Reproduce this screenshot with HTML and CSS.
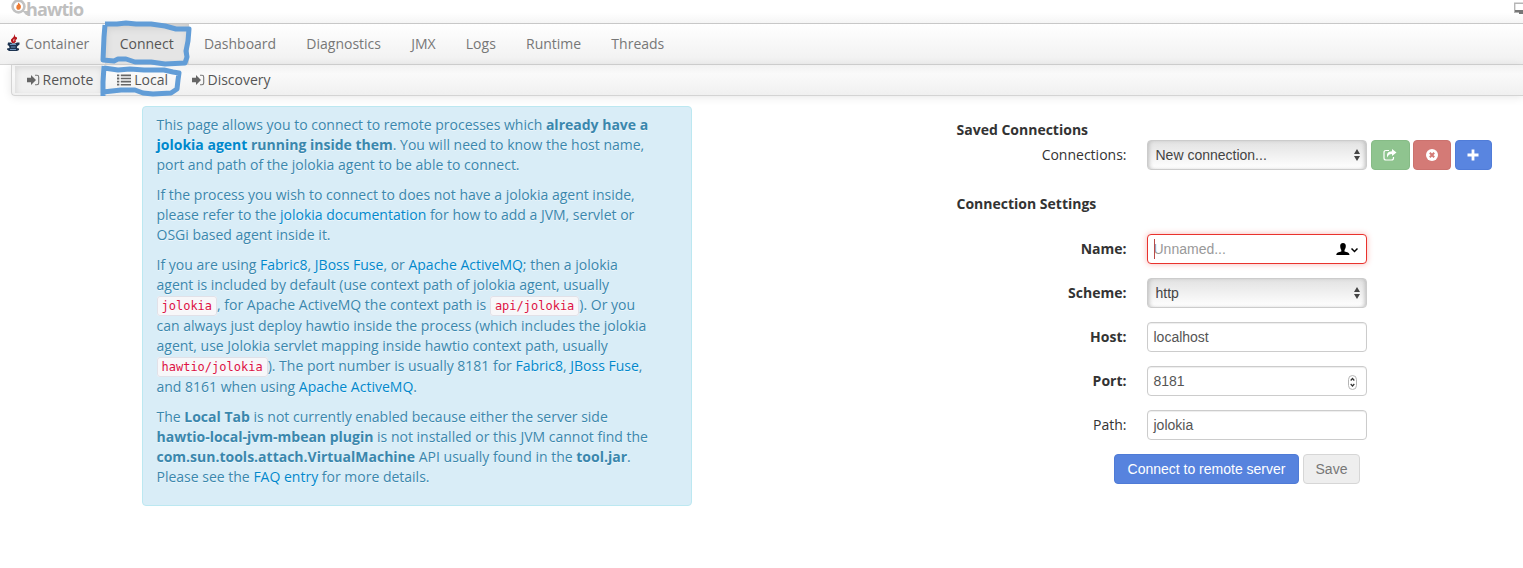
FILE: index.html
```html
<!DOCTYPE html>
<html lang="en">
<head>
<meta charset="utf-8">
<title>hawtio</title>
<link rel="stylesheet" href="styles.css">
</head>
<body>
<header class="topbar">
  <div class="brand">
    <svg class="brand-mark" width="19" height="17" viewBox="0 0 19 17"><circle cx="8.500" cy="6.500" r="5.900" fill="none" stroke="#c2c2c2" stroke-width="2.600"/><path d="M12.500 11h6.500v4h-3z" fill="#c2c2c2"/><path d="M8 2.500c3 2 3.500 4 2.500 6-1 1.800-3.500 1.500-4 0-.5-1.700.2-2.200.4-3.500 1 .3 1.300-1 1.100-2.500z" fill="#ee7b32"/></svg>
    <span class="brand-name">hawtio</span>
  </div>
  <svg class="monitor" width="12" height="12" viewBox="0 0 12 12"><path d="M.7 1.200h14v9h-14z" fill="#fff" stroke="#b5b5b5" stroke-width="1.400"/><path d="M1 8h14v2H1zM5 10h6v2H5z" fill="#777"/></svg>
</header>
<nav class="mainnav">
  <a class="tab container"><svg width="13" height="17" viewBox="0 0 13 17"><path d="M8 0v2.500l2 1v1.500L8.500 6l.5 1.500L7.500 9H5L4 7V5.500L6.500 3z" fill="#b5161c"/><path d="M6 6l1.500-1.500L7 8z" fill="#f3c9c9"/><path d="M1 8.500h3l1 1h3l2-1h2.500v2L10 12.500v1.500l2 .5v1.500l-2 1H2L0 15.500v-1l2.500-.5-.5-2-1.500-1z" fill="#1d3350"/><path d="M3 10.500h6M4 13h4.500M3 15.500h6" stroke="#6f95c0"/></svg>Container</a>
  <a class="tab active">Connect</a>
  <a class="tab">Dashboard</a>
  <a class="tab">Diagnostics</a>
  <a class="tab">JMX</a>
  <a class="tab">Logs</a>
  <a class="tab">Runtime</a>
  <a class="tab">Threads</a>
</nav>
<nav class="subnav">
  <a class="sub selected"><svg class="signin" width="13" height="12" viewBox="0 0 13 12"><path d="M0 3.800h4V1l5 5-5 5V8.200H0z"/><path d="M8 1.300h2q1.700 0 1.700 1.700v6q0 1.700-1.700 1.700H8" fill="none" stroke="#777" stroke-width="1.100"/></svg>Remote</a>
  <a class="sub local"><svg width="14" height="12" viewBox="0 0 14 12"><path d="M0 .5h2.300v1.800H0zM0 3.600h2.300v1.800H0zM0 6.700h2.300v1.800H0zM0 9.800h2.300v1.800H0zM3.800.6H14v1.600H3.800zM3.800 3.700H14v1.600H3.800zM3.800 6.800H14v1.600H3.800zM3.800 9.900H14v1.600H3.800z"/></svg>Local</a>
  <a class="sub"><svg class="signin" width="13" height="12" viewBox="0 0 13 12"><path d="M0 3.800h4V1l5 5-5 5V8.200H0z"/><path d="M8 1.300h2q1.700 0 1.700 1.700v6q0 1.700-1.700 1.700H8" fill="none" stroke="#777" stroke-width="1.100"/></svg>Discovery</a>
</nav>
<main class="page">
  <section class="alert">
    <p>This page allows you to connect to remote processes which <b>already have a<br><a>jolokia agent</a> running inside them</b>. You will need to know the host name,<br>port and path of the jolokia agent to be able to connect.</p>
    <p>If the process you wish to connect to does not have a jolokia agent inside,<br>please refer to the <a>jolokia documentation</a> for how to add a JVM, servlet or<br>OSGi based agent inside it.</p>
    <p>If you are using <a>Fabric8</a>, <a>JBoss Fuse</a>, or <a>Apache ActiveMQ</a>; then a jolokia<br>agent is included by default (use context path of jolokia agent, usually<br><code>jolokia</code>, for Apache ActiveMQ the context path is <code>api/jolokia</code>). Or you<br>can always just deploy hawtio inside the process (which includes the jolokia<br>agent, use Jolokia servlet mapping inside hawtio context path, usually<br><code>hawtio/jolokia</code>). The port number is usually 8181 for <a>Fabric8</a>, <a>JBoss Fuse</a>,<br>and 8161 when using <a>Apache ActiveMQ</a>.</p>
    <p>The <b>Local Tab</b> is not currently enabled because either the server side<br><b>hawtio-local-jvm-mbean plugin</b> is not installed or this JVM cannot find the<br><b>com.sun.tools.attach.VirtualMachine</b> API usually found in the <b>tool.jar</b>.<br>Please see the <a>FAQ entry</a> for more details.</p>
  </section>
  <form class="settings">
    <div class="legend">Saved Connections</div>
    <div class="row saved">
      <label>Connections:</label>
      <div class="field select">New connection...<svg class="arrows" width="6" height="12" viewBox="0 0 6 12"><path d="M0 5l3-5 3 5zM0 7h6l-3 5z" fill="#444"/></svg></div>
      <span class="btn open"><svg width="14" height="12" viewBox="0 0 14 12"><path d="M6 1.500H3Q1 1.500 1 3.500v5.500q0 2 2 2h5.500q2 0 2-2V8" fill="none" stroke="#fff" stroke-width="1.200"/><path d="M9 0l4.500 3.500L9 7V5C6.500 5 5 6 4.500 8.500 3 5 5 2.200 9 2.200z" fill="#fff"/></svg></span>
      <span class="btn remove"><svg width="12" height="12" viewBox="0 0 12 12"><circle cx="6" cy="6" r="6" fill="#fff"/><path d="M3.800 3.800l4.400 4.400M8.200 3.800L3.800 8.200" stroke="#d47a76" stroke-width="2"/></svg></span>
      <span class="btn add"><svg width="12" height="12" viewBox="0 0 12 12"><path d="M6 .5v11M.5 6h11" stroke="#fff" stroke-width="2.800"/></svg></span>
    </div>
    <div class="legend second">Connection Settings</div>
    <div class="row"><label class="req">Name:</label><div class="field invalid"><span class="caret"></span>Unnamed...<svg class="user" width="22" height="13" viewBox="0 0 22 13"><path d="M7 0c2 0 3 1.300 2.800 3.300C9.700 5 9.200 6 8.500 7v1.500c2.500.8 5 1 5 3.500H.3c0-2.500 2.500-2.700 5-3.500V7C4.600 6 4.300 5 4.200 3.300 4 1.300 5 0 7 0z"/><path d="M15.500 5.500l3 3 3-3" fill="none" stroke="#000" stroke-width="1.500"/></svg></div></div>
    <div class="row"><label class="req">Scheme:</label><div class="field select">http<svg class="arrows" width="6" height="12" viewBox="0 0 6 12"><path d="M0 5l3-5 3 5zM0 7h6l-3 5z" fill="#444"/></svg></div></div>
    <div class="row"><label class="req">Host:</label><div class="field">localhost</div></div>
    <div class="row"><label class="req">Port:</label><div class="field">8181<svg class="spin" width="9" height="15" viewBox="0 0 9 15"><rect x=".5" y=".5" width="8" height="14" rx="4" fill="#fff" stroke="#b5b5b5"/><path d="M2.700 5.500l1.800-2 1.800 2M2.700 9l1.800 2 1.800-2" fill="none" stroke="#333" stroke-width="1.200"/></svg></div></div>
    <div class="row"><label>Path:</label><div class="field">jolokia</div></div>
    <div class="actions"><span class="btn primary">Connect to remote server</span><span class="btn save">Save</span></div>
  </form>
</main>
<svg class="marks" width="200" height="110" viewBox="0 0 200 110">
  <path d="M105 25l-1 12-1 23 11 1 4-2 8 0 9 3 16 0 14 2 20-1 2-6-1-6 2-10 1-12-13 0-11-3-14-2-15 0-10-1-9 1-12 0"/>
  <path d="M104 66l-1 16 0 14M104 68l14 2 12-1 14 1 20 0 9 2 6 1-1 7-1 9-6 4-18 1-10-1-8-3-14 0-9 1-9 1"/>
</svg>
</body>
</html>
```
FILE: styles.css
```css
* { box-sizing: border-box; }
body {
  margin: 0;
  height: 568px;
  overflow: hidden;
  background: #fff;
  color: #333;
  font: 14px/20px "Open Sans", sans-serif;
}
.topbar {
  height: 24px;
  display: flex;
  justify-content: space-between;
  border-bottom: 1px solid #c8c8c8;
  background: linear-gradient(#fff 55%, #f5f5f5);
}
.brand { display: flex; padding-left: 10px; }
.brand-name {
  margin-left: -3px;
  font: bold 18px/18px "Open Sans", sans-serif;
  color: #bfbfbf;
  letter-spacing: -0.9px;
}
.monitor { margin: 2px -3px 0 0; }
.mainnav {
  height: 41px;
  display: flex;
  padding-left: 7px;
  border-bottom: 1px solid #d4d4d4;
  background: linear-gradient(#fff, #f0f0f0);
}
.tab {
  padding: 10px 15.1px;
  color: #777;
  white-space: nowrap;
}
.tab.container { display: flex; gap: 5px; padding: 10px 15.3px 10px 0; }
.tab.active {
  color: #555;
  background: #e5e5e5;
  box-shadow: inset 0 3px 8px rgba(0, 0, 0, 0.125);
}
.subnav {
  height: 31px;
  margin-left: 11px;
  display: flex;
  padding: 1px 0 2px 3px;
  border: solid #d4d4d4;
  border-width: 0 0 1px 1px;
  border-radius: 0 0 0 4px;
  background: linear-gradient(#f2f2f2, #fafafa 30%, #f0f0f0);
  box-shadow: 0 1px 10px rgba(0, 0, 0, 0.1);
}
.sub {
  display: flex;
  align-items: center;
  gap: 3px;
  padding: 0 12px 0 11.5px;
  color: #555;
}
.sub svg { fill: #666; }
.sub.selected {
  padding-right: 8px;
  box-shadow: inset 1px 2px 6px rgba(0, 0, 0, 0.1);
  background: #f1f1f1;
}
.sub.local { padding-left: 16px; }
.page { display: flex; padding: 10px 0 0 142px; }
.alert {
  width: 550px;
  height: 400px;
  padding: 8px 0 8px 13.5px;
  border: 1px solid #bce8f1;
  border-radius: 4px;
  background: #d9edf7;
  color: #3a87ad;
  text-shadow: 0 1px 0 rgba(255, 255, 255, 0.5);
  white-space: nowrap;
}
.alert p { margin: 0 0 10px; }
.alert a { color: #0088cc; }
code {
  padding: 2px 4px;
  border: 1px solid #e1e1e8;
  border-radius: 3px;
  background: #f7f7f9;
  color: #dd1144;
  font: 12px/20px "DejaVu Sans Mono", monospace;
}
.settings { margin-left: 264.5px; padding-top: 14px; }
.legend { font-weight: bold; }
.legend.second { margin: 14px 0 20px; }
.row { display: flex; height: 30px; margin-bottom: 14px; }
.row.saved { margin: 0 0 24px; gap: 0 3.6px; }
.row label { width: 170px; margin-right: 20.5px; line-height: 30px; text-align: right; }
.row.saved label { margin-right: 16.9px; }
.row .req { font-weight: bold; }
.field {
  position: relative;
  width: 220px;
  height: 30px;
  padding: 4px 5.5px;
  border: 1px solid #ccc;
  border-radius: 4px;
  background: #fff;
  box-shadow: inset 0 1px 1px rgba(0, 0, 0, 0.075);
  color: #555;
  font: 14px/20px "Liberation Sans", sans-serif;
}
.select {
  padding-left: 7.5px;
  color: #444;
  background: linear-gradient(#e2e2e2, #fff);
  box-shadow: inset 3px 0 4px -2px #bbb, inset -3px 0 4px -2px #bbb;
}
.invalid {
  border-color: #e9322d;
  box-shadow: 0 0 6px #f8b9b7;
  color: #999;
}
.caret { position: absolute; left: 6px; top: 4px; width: 1px; height: 20px; background: #b94a48; }
.arrows { position: absolute; right: 6px; top: 8px; }
.user { position: absolute; right: 8px; top: 8px; }
.spin { position: absolute; right: 9px; top: 8px; }
.btn {
  height: 30px;
  display: flex;
  align-items: center;
  justify-content: center;
  border-radius: 4px;
  font: 14px/20px "Liberation Sans", sans-serif;
}
.open { width: 39px; background: #8fc48f; border: 1px solid #86bb86; }
.remove { width: 38px; background: #d47a76; border: 1px solid #cb726e; }
.add { width: 37px; background: #5985e0; border: 1px solid #507cd8; }
.actions { display: flex; gap: 4px; padding-left: 157.5px; }
.primary { width: 185px; background: #5783de; border: 1px solid #4f7bd6; color: #fff; }
.save { width: 57px; background: #eee; border: 1px solid #d6d6d6; color: #777; }
.marks {
  position: absolute;
  left: 0;
  top: 0;
  fill: none;
  stroke: #629dd7;
  stroke-width: 5;
  stroke-linejoin: round;
}
```
